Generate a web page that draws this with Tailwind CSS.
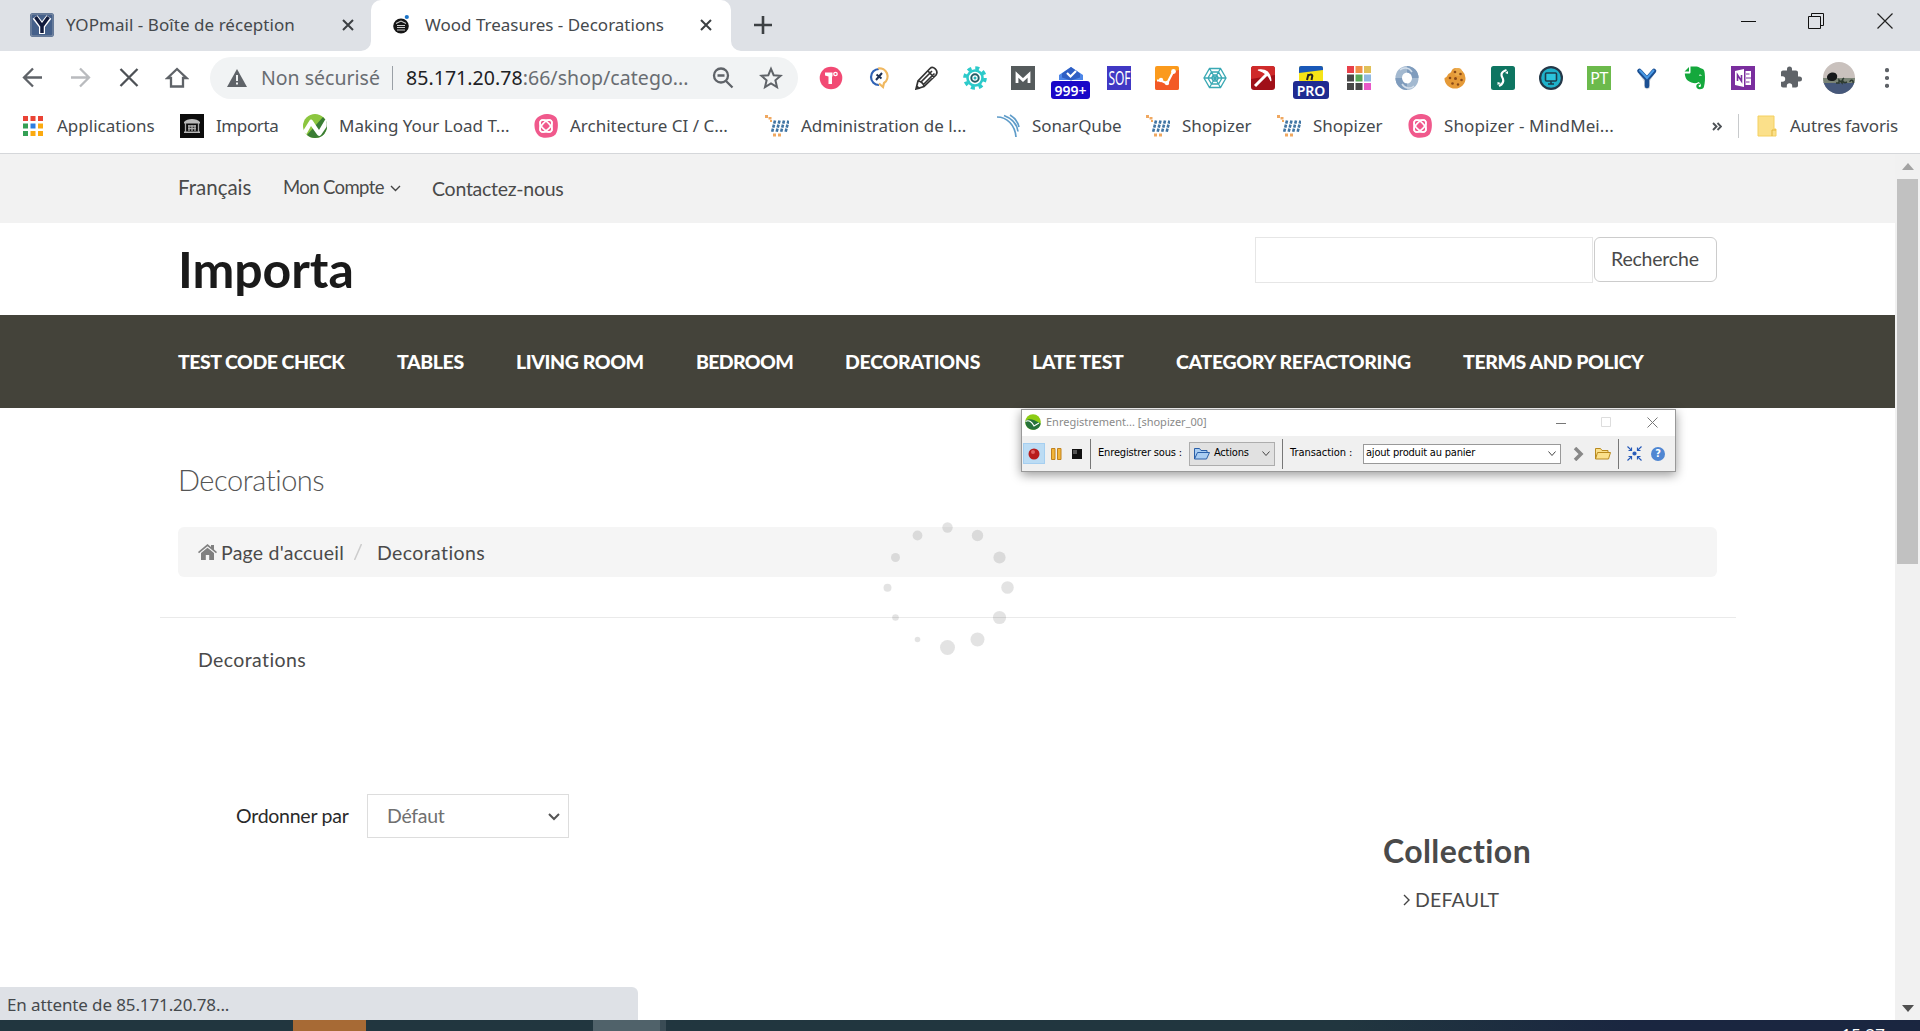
<!DOCTYPE html>
<html lang="fr">
<head>
<meta charset="utf-8">
<title>Wood Treasures - Decorations</title>
<script src="https://cdn.jsdelivr.net/npm/@tailwindcss/browser@4"></script>
</head>
<body class="w-[1920px] h-[1031px] overflow-hidden flex flex-col bg-white font-['Noto_Sans',sans-serif] text-[17px] text-[#45494d] whitespace-nowrap">

<svg class="hidden">
  <symbol id="cart" viewBox="0 0 24 24">
    <g fill="#f0a860"><rect x="0" y="1" width="3" height="3"/><rect x="3.500" y="3" width="3" height="2.500"/><rect x="5" y="6" width="2" height="2"/><rect x="8" y="19.500" width="3" height="3"/><rect x="13" y="19.500" width="3" height="3"/></g>
    <g stroke="#3f74a3" stroke-width="2.600" stroke-dasharray="3.200 1"><path d="M10 6.500 7 18.500M14.500 6.500 11.500 18.500M19 6.500l-3 12M23.500 6.500l-3 12"/></g>
  </symbol>
  <symbol id="mind" viewBox="0 0 24 24">
    <path fill="#f0598c" d="M8 1c4-2 12-.5 14.500 3 2 4 2 12-1 16.500C18 24 9 25 5 22 1 19-.5 12 1 7c1-3 4-5 7-6z"/>
    <g fill="none" stroke="#fff" stroke-width="1.600"><rect x="6" y="6" width="12" height="12" rx="3"/><ellipse cx="12" cy="12" rx="7.500" ry="3.800" transform="rotate(45 12 12)"/><ellipse cx="12" cy="12" rx="7.500" ry="3.800" transform="rotate(-45 12 12)"/></g>
  </symbol>
  <symbol id="close" viewBox="0 0 14 14"><path d="M2 2l10 10M12 2 2 12" stroke="#3c4043" stroke-width="2" fill="none"/></symbol>
  <symbol id="neo" viewBox="0 0 16 16"><circle cx="8" cy="8" r="7.800" fill="#8ccc14"/><path d="M.4 7C4 4 8 5 15.700 9.500 15 13.500 12 16 8 15.800 3.500 15.500 0 12 .4 7z" fill="#26733a"/><path d="M.5 7.500C4 5.500 7 8 9 12l5-3" stroke="#fff" fill="none" stroke-width="1.100"/></symbol>
</svg>

<!-- Tab strip -->
<header class="h-[51px] shrink-0 bg-[#dee1e6] flex">
  <div class="w-[371px] flex items-center pl-[30px] pr-[16px] pb-[2px]">
    <svg class="w-6 h-6" viewBox="0 0 24 24"><rect width="24" height="24" rx="3" fill="#45608a"/><rect x="1" y="1" width="22" height="22" rx="2" fill="none" stroke="#8794a8"/><path d="M5 4l7 9 7-9M12 12v9" stroke="#fff" stroke-width="6" fill="none"/><path d="M5.500 4l6.500 9 6.500-9M12 12v8" stroke="#101a3c" stroke-width="3.500" fill="none"/></svg>
    <span class="ml-3 tracking-[0.05px]">YOPmail - Boîte de réception</span>
    <svg class="w-[14px] h-[14px] ml-auto"><use href="#close"/></svg>
  </div>
  <div class="relative w-[360px] bg-white rounded-t-[10px] flex items-center pl-[22px] pr-[18px] pb-[2px]">
    <svg class="absolute -left-[10px] bottom-0 w-[10px] h-[10px]"><path d="M10 0v10H0A10 10 0 0 0 10 0z" fill="#fff"/></svg>
    <svg class="absolute -right-[10px] bottom-0 w-[10px] h-[10px]"><path d="M0 0v10h10A10 10 0 0 1 0 0z" fill="#fff"/></svg>
    <svg class="w-5 h-6" viewBox="0 0 20 24"><ellipse cx="8" cy="13" rx="7.800" ry="7.500" fill="#151515"/><path d="M3 10.500l5-2.500 5 2.500M4 12.500h8M4 14.500h8M4 17h8" stroke="#ccc" stroke-width="1.100" fill="none"/><circle cx="13.800" cy="4" r="2.100" fill="#1a73c8"/></svg>
    <span class="ml-[12px]">Wood Treasures - Decorations</span>
    <svg class="w-[14px] h-[14px] ml-auto"><use href="#close"/></svg>
  </div>
  <div class="flex-1 flex items-center pl-[23px]">
    <svg class="w-[18px] h-[18px] mb-[2px]"><path d="M9 0v18M0 9h18" stroke="#3c4043" stroke-width="2.600"/></svg>
    <svg class="ml-auto w-[15px] h-[15px] mb-[9px]"><path d="M0 7.500h15" stroke="#111" stroke-width="1"/></svg>
    <svg class="ml-[52px] w-4 h-4 mb-[9px]" fill="none" stroke="#111"><path d="M.5 3.500h12v12H.5zM3.500 3.500v-3h12v12h-3"/></svg>
    <svg class="ml-[53px] mr-[27px] w-4 h-4 mb-[9px]" fill="none" stroke="#222" stroke-width="1.200"><path d="M.5.500l15 15M15.500.500l-15 15"/></svg>
  </div>
</header>

<!-- Toolbar -->
<div class="h-[54px] shrink-0 flex items-center pl-[21px]" >
  <svg class="w-6 h-6" fill="none" stroke="#5f6368" stroke-width="2.300" viewBox="0 0 24 24"><path d="M21 11.500H3M12 2.500l-9 9 9 9"/></svg>
  <svg class="ml-6 w-6 h-6" fill="none" stroke="#b9bbbe" stroke-width="2.300" viewBox="0 0 24 24"><path d="M2 11.500h18M11 2.500l9 9-9 9"/></svg>
  <svg class="ml-6 w-6 h-6" fill="none" stroke="#4d5156" stroke-width="2.300" viewBox="0 0 24 24"><path d="M3.500 3l17 17M20.500 3l-17 17"/></svg>
  <svg class="ml-6 w-6 h-6" fill="none" stroke="#5f6368" stroke-width="2.300" viewBox="0 0 24 24"><path d="M2.500 12 12 3l9.500 9H18v8.500H6V12z"/></svg>
  <div class="ml-[21px] w-[588px] h-[42px] rounded-full bg-[#f1f3f4] flex items-center pl-[17px] text-[19.5px]">
    <svg class="w-5 h-[18px]" viewBox="0 0 20 18"><path d="M10 0l10 18H0z" fill="#5f6368"/><path d="M10 6v6M10 13.500v2" stroke="#f1f3f4" stroke-width="2"/></svg>
    <span class="ml-[14px] w-[131px] text-[#696d72]">Non sécurisé</span>
    <span class="w-px h-6 bg-[#9aa0a6]"></span>
    <span class="ml-[13px] tracking-[0.05px] text-[#696d72]"><span class="text-[#202124]">85.171.20.78</span>:66/shop/catego...</span>
    <svg class="ml-auto w-6 h-6" viewBox="0 0 24 24" fill="none" stroke="#5f6368" stroke-width="2.300"><circle cx="10" cy="9.500" r="7"/><path d="M6.500 9.500h7M15 15l6.500 6.500"/></svg>
    <svg class="ml-6 mr-[15px] w-6 h-6" viewBox="0 0 24 24" fill="none" stroke="#5f6368" stroke-width="2"><path d="M12 2.800l2.700 6.400 6.900.6-5.200 4.500 1.600 6.800-6-3.600-6 3.600 1.600-6.800-5.200-4.500 6.900-.6z"/></svg>
  </div>
  <!-- Extensions -->
  <div class="ml-[21px] flex items-center gap-6">
    <svg class="w-6 h-6" viewBox="0 0 24 24"><circle cx="12" cy="12" r="11.300" fill="#f24a74"/><path d="M6 6.500h7.500v4H13V18h-3.500v-7.500L6 9.500z" fill="#fff"/><circle cx="16.500" cy="8" r="1.700" fill="none" stroke="#fff" stroke-width="1.300"/></svg>
    <svg class="w-6 h-6" viewBox="0 0 24 24" fill="none"><path d="M12 3a8 8 0 1 0 0 16" stroke="#2f62b5" stroke-width="2.200"/><path d="M11 2.500a8 8 0 0 1 6 14.500l-1 4-4-3.500" stroke="#f0b860" stroke-width="2.200"/><path d="M9 14l6-7M9.500 8.500l5 4" stroke="#1c2f52" stroke-width="2"/></svg>
    <svg class="w-6 h-6" viewBox="0 0 24 24" fill="none" stroke="#333" stroke-width="1.700"><path d="M1 23l2-8L15 2.500c3-3 9 2 6 6.500L9 20.500zM3 15c3 0 6 3 6 5.500M13 5l6 6.500M6 16 17 5M9 18 19.500 7.500M1 23l3-.800-2-2z"/></svg>
    <svg class="w-6 h-6" viewBox="0 0 24 24" fill="none"><circle cx="12" cy="12" r="10" stroke="#2ccaca" stroke-width="3.600" stroke-dasharray="4 3.850"/><circle cx="12" cy="12" r="7.500" stroke="#2ccaca" stroke-width="2.600"/><circle cx="12" cy="12" r="3.700" stroke="#245d66" stroke-width="2"/><circle cx="12" cy="12" r="1.500" fill="#2ab7bd"/></svg>
    <svg class="w-6 h-6" viewBox="0 0 24 24"><path d="M0 0h24v24H0z" fill="#555b5c"/><path d="M6 17V8.500l6 5.500 6-5.500V17" fill="none" stroke="#fff" stroke-width="2.800"/></svg>
    <div class="relative w-6 h-6"><svg class="w-6 h-6" viewBox="0 0 24 24"><path d="M0 9l12-8 12 8v5H0z" fill="#4d86e8"/><path d="M3 7.500 12 1l9 6.500v4l-9 3-9-3z" fill="#2f5fc4"/><path d="M8 7l3.500 3.500L17 5" stroke="#fff" stroke-width="2.200" fill="none"/></svg>
      <span class="absolute -left-[8px] top-[15px] w-[39px] h-[18px] rounded-[3px] bg-[#1a08c8] text-white text-[14px] font-semibold leading-[19px] text-center">999+</span></div>
    <div class="w-6 h-6 bg-[#4038c4] flex items-center justify-center"><span class="text-white text-[20px] leading-6 font-['Noto_Sans',sans-serif] scale-x-[0.6]">SOF</span></div>
    <svg class="w-6 h-6" viewBox="0 0 24 24"><rect width="24" height="24" rx="2" fill="#fb9a1c"/><path d="M0 15l6-2 6 4 8-12 4-1v18a2 2 0 0 1-2 2H2a2 2 0 0 1-2-2z" fill="#f35a26"/><path d="M2 14.500h4l6 3L18.500 5" stroke="#fff" stroke-width="2.200" fill="none"/><g fill="#fff"><circle cx="6" cy="14" r="2.200"/><circle cx="12" cy="17" r="2.200"/><circle cx="18.500" cy="5.500" r="2.400"/></g></svg>
    <svg class="w-6 h-6" viewBox="0 0 24 24" fill="none" stroke="#3aa9b4" stroke-width="1.300"><path d="M6.500 2.500h11L23 12l-5.500 9.500h-11L1 12zM8.500 6h7L19 12l-3.500 6h-7L5 12zM10.300 9h3.400l1.700 3-1.700 3h-3.400l-1.700-3zM1 12h22M6.500 2.500l11 19M17.500 2.500l-11 19"/></svg>
    <svg class="w-6 h-6" viewBox="0 0 24 24"><rect width="24" height="24" rx="3" fill="#a01018"/><path d="M0 13V3a3 3 0 0 1 3-3h18a3 3 0 0 1 3 3v6z" fill="#cf2a2a"/><path d="M4 20 17 7" stroke="#fff" stroke-width="3"/><path d="M7 4c8-1 12 2 13 11-2-5-6-9-13-11z" fill="#fff" stroke="#fff" stroke-width="1.200"/></svg>
    <div class="relative w-6 h-6"><svg class="w-6 h-6" viewBox="0 0 24 24"><path d="M0 2a2 2 0 0 1 2-2h20a2 2 0 0 1 2 2v20H0z" fill="#f6e416"/><path d="M0 2a2 2 0 0 1 2-2h20a2 2 0 0 1 2 2v2L0 7z" fill="#1958b8"/><path d="M8 14l1.500-6M9 10c3-3 5-1 4 1.500L12.500 14" stroke="#222" stroke-width="2" fill="none"/></svg>
      <span class="absolute -left-[6px] top-[15px] w-9 h-[18px] rounded-[3px] bg-[#1f2b91] text-white text-[14px] font-semibold leading-[19px] text-center">PRO</span></div>
    <svg class="w-6 h-6" viewBox="0 0 24 24"><path fill="#e8404a" d="M0 0h7v7H0z"/><path fill="#f09048" d="M8.500 0h7v7h-7z"/><path fill="#e0c058" d="M17 0h7v7h-7z"/><path fill="#484848" d="M0 8.500h7v7H0zM0 17h7v7H0zM8.500 17h7v7h-7z"/><path fill="#58a858" d="M8.500 8.500h7v7h-7z"/><path fill="#90b8e0" d="M17 8.500h7v7h-7z"/><path fill="#e858c8" d="M17 17h7v7h-7z"/></svg>
    <svg class="w-6 h-6" viewBox="0 0 24 24" fill="none" stroke-width="6.500"><ellipse cx="12" cy="12" rx="8.300" ry="8.700" stroke="#a3b9d0"/><path d="M12 3.300a8.300 8.700 0 0 1 8.300 8.700M12 20.700A8.300 8.700 0 0 1 3.700 12" stroke="#7f9cbd"/><path d="M5 4c3-3 9-3 12 2M19 20c-3 3-9 3-12-2" stroke="#d3deea" stroke-width="1.500"/></svg>
    <svg class="w-6 h-6" viewBox="0 0 24 24"><path d="M12 2a10.500 10 0 0 1 10.500 10A10.500 10 0 0 1 12 22.500 10.500 10 0 0 1 1.500 12C5 11 4 8 7 7c2-1 1-4 5-5z" fill="#e59a38"/><circle cx="15" cy="6" r="4" fill="#eba94a"/><g fill="#8a4a18"><circle cx="12" cy="6" r="1.300"/><circle cx="17.500" cy="8" r="1.300"/><circle cx="7" cy="12" r="1.300"/><circle cx="12.500" cy="12.500" r="1.500"/><circle cx="18.500" cy="14" r="1.300"/><circle cx="9.500" cy="17.500" r="1.300"/><circle cx="15" cy="18.500" r="1.200"/></g></svg>
    <svg class="w-6 h-6" viewBox="0 0 24 24"><rect width="24" height="24" rx="2.500" fill="#0e7561"/><path d="M15.500 4c-6 2-6 5-3.500 9 1 3 0 5-4 7" stroke="#fff" stroke-width="2.200" fill="none"/><path d="M14 7l3-2v3zM10 17l-3.500 2v-3z" fill="#fff"/></svg>
    <svg class="w-6 h-6" viewBox="0 0 24 24"><circle cx="12" cy="12" r="12" fill="#253848"/><circle cx="12" cy="12" r="9.800" fill="#1fb1ca"/><rect x="6.500" y="7" width="11" height="8" rx="1" fill="#2cc4dc" stroke="#1c3c4c" stroke-width="1.600"/><path d="M9 18h6M12 15v3" stroke="#1c3c4c" stroke-width="1.600"/></svg>
    <div class="w-6 h-6 bg-[#6cba4c] text-white text-[16px] leading-6 text-center tracking-[-0.5px]">PT</div>
    <svg class="w-6 h-6" viewBox="0 0 24 24"><path d="M7 4l5 7 5-7 3 3-5 8v7l-3 1.500-3-2v-6L4 8z" fill="#d8dadd"/><path d="M4.500 5l7.500 8 7-8M12 12v8" stroke="#1b4f92" stroke-width="4.600" stroke-linecap="round" fill="none"/><path d="M5 4.500l7 7.500 6.500-7.500" stroke="#4a9ae6" stroke-width="2" fill="none" stroke-linecap="round"/></svg>
    <svg class="w-6 h-6" viewBox="0 0 24 24"><path fill="#14a83c" d="M7.500.500h6c2 0 3 1.500 5 2 2 .500 2.800 1.500 3.200 4.500.6 5 .3 10-.8 14-.700 2.500-5.500 3-7 1-1.500-2.500 0-5 3-4.500v1.500c-2 0-1.500 2 0 2 2 0 1-4-1.500-5-1.500 1.500-4 1.500-7 .500C4 15 2 12 1.800 7.500H6c1 0 1.500-.5 1.500-1.500zM6 1v4.500H1.500z"/><path d="M16 9.500c1-.8 2-.5 2.500.5" stroke="#fff" fill="none"/></svg>
    <svg class="w-6 h-6" viewBox="0 0 24 24"><path d="M0 0h24v24H0z" fill="#7a2e9e"/><path d="M4 5l9-2v18l-9-2zM14.500 5H20v14h-5.500z" fill="#fff"/><path d="M6.500 15V9l4 6V9" stroke="#7a2e9e" stroke-width="1.600" fill="none"/><path d="M15 8h3.500M15 12h5.500M15 16h3.500" stroke="#7a2e9e" stroke-width="1.200"/></svg>
    <svg class="w-6 h-6" viewBox="0 0 24 24"><path fill="#5f6368" d="M20.500 10.500H19v-4c0-1.100-.9-2-2-2h-4V3a2.500 2.500 0 0 0-5 0v1.500H4c-1.100 0-2 .9-2 2v3.800h1.500a2.700 2.700 0 0 1 0 5.400H2v3.800c0 1.100.9 2 2 2h3.800V20a2.700 2.700 0 0 1 5.400 0v1.500H17c1.100 0 2-.9 2-2v-4h1.500a2.500 2.500 0 0 0 0-5z"/></svg>
  </div>
  <svg class="ml-[20px] w-8 h-8" viewBox="0 0 32 32"><defs><clipPath id="av"><circle cx="16" cy="16" r="16"/></clipPath></defs><g clip-path="url(#av)"><path d="M0 0h32v32H0z" fill="#c9c1bd"/><path d="M0 20h32v12H0z" fill="#46587a"/><path d="M0 16h32v5H0z" fill="#7a8476"/><path d="M4 15c0-4 8-7 10-2 1 4-2 6-5 6s-5-1-5-4z" fill="#15181a"/><path d="M13 21h3v-3l3 3v-3M21 16c-3 2-1 6 3 4M27 20c0-3 4-2 3 1" stroke="#2c3a30" stroke-width="1.500" fill="none"/></g></svg>
  <svg class="ml-[30px] w-1 h-5" fill="#5f6368" viewBox="0 0 4 20"><circle cx="2" cy="2.200" r="2.100"/><circle cx="2" cy="10" r="2.100"/><circle cx="2" cy="17.800" r="2.100"/></svg>
</div>

<!-- Bookmarks -->
<div class="h-[49px] shrink-0 border-b border-[#d5d7da] flex items-center pb-[6px] pl-[23px]">
  <svg class="w-5 h-5" viewBox="0 0 20 20"><path fill="#ea4335" d="M0 0h5v5H0zM7.500 0h5v5h-5zM15 0h5v5h-5z"/><path fill="#34a055" d="M0 7.500h5v5H0zM0 15h5v5H0z"/><path fill="#2d7de0" d="M7.500 7.500h5v5h-5z"/><path fill="#fbaa10" d="M15 7.500h5v5h-5zM7.500 15h5v5h-5zM15 15h5v5h-5z"/></svg>
  <span class="ml-[14px] w-[123px]">Applications</span>
  <svg class="w-6 h-6" viewBox="0 0 24 24"><path d="M0 0h24v24H0z" fill="#0c0c0c"/><path d="M4 8c3-4 13-4 16 0v1.500H4zM4 17.500h16V19H4z" fill="#bbb"/><path d="M5.500 9v9M18.500 9v9M8 12h8M8 14.500h8M9 11v6M12 11v6M15 11v6" stroke="#aaa" stroke-width="1.300"/></svg>
  <span class="ml-3 w-[87px] tracking-[-0.4px]">Importa</span>
  <svg class="w-6 h-6" viewBox="0 0 24 24"><circle cx="12" cy="12" r="12" fill="#8cc63f"/><path d="M4 21 20 3a12 12 0 0 1-8 21c-3 0-6-1-8-3z" fill="#3a7d34"/><path d="M0 17 6.500 6.500c1-1.500 2.500-1 3.500.5l6 9L22.500 5c1.500 3 1.500 5 1 8l-5.500 8c-1.500 1.500-3 1-4-.500L8 12l-4.500 8C2 19 .5 18 0 17z" fill="#fff"/></svg>
  <span class="ml-3 w-[195px]">Making Your Load T...</span>
  <svg class="w-6 h-6"><use href="#mind"/></svg>
  <span class="ml-3 w-[195px]">Architecture CI / C...</span>
  <svg class="w-6 h-6"><use href="#cart"/></svg>
  <span class="ml-3 w-[195px]">Administration de l...</span>
  <svg class="w-6 h-6" viewBox="0 0 24 24" fill="none" stroke="#5f9cc9" stroke-width="1.700"><path d="M1 3c10 0 18 8 19 20M8 1.500c8 3 13 9 14 16M14 1c5 3 8 7 9 12"/></svg>
  <span class="ml-3 w-[114px] tracking-[-0.1px]">SonarQube</span>
  <svg class="w-6 h-6"><use href="#cart"/></svg>
  <span class="ml-3 w-[95px]">Shopizer</span>
  <svg class="w-6 h-6"><use href="#cart"/></svg>
  <span class="ml-3 w-[95px]">Shopizer</span>
  <svg class="w-6 h-6"><use href="#mind"/></svg>
  <span class="ml-3 tracking-[0.1px]">Shopizer - MindMei...</span>
  <svg class="ml-auto w-[10px] h-[9px]" fill="none" stroke="#4d5156" stroke-width="1.900"><path d="M1 1l3.500 3.500L1 8M5.500 1 9 4.500 5.500 8"/></svg>
  <span class="ml-[16px] w-px h-6 bg-[#c8cacc]"></span>
  <svg class="ml-[18px] w-[20px] h-[22px]" viewBox="0 0 20 22"><path d="M1 1h16v13h2v7H1z" fill="#fbe08a" stroke="#f4d060"/><path d="M15 21v-6h4" stroke="#e2b53c" fill="none"/></svg>
  <span class="ml-[13px] mr-[22px] tracking-[-0.15px]">Autres favoris</span>
</div>

<!-- Page viewport -->
<div class="relative flex-1 min-h-0 flex font-['Lato',sans-serif] text-[19.5px] text-[#4a4a4a]">
  <main class="w-[1895px] flex flex-col">
    <div class="h-[69px] shrink-0 bg-[#f2f2f2] pl-[178px] flex items-center">
      <span class="text-[20.5px] w-[105px] -mt-[3px]">Français</span>
      <span class="text-[18.5px] tracking-[-0.6px] w-[107px] -mt-px">Mon Compte</span>
      <svg class="w-[11px] h-[7px]" fill="none" stroke="#444" stroke-width="1.400"><path d="M1 1l4.500 4.500L10 1"/></svg>
      <span class="ml-[31px] mt-px tracking-[-0.25px]">Contactez-nous</span>
    </div>
    <div class="h-[92px] shrink-0 pl-[178px] pr-[178px] flex items-start">
      <h1 class="text-[50px] leading-[60px] font-bold text-[#1a1a1a] mt-[16px] tracking-[-0.05px]">Importa</h1>
      <div class="ml-auto mt-[14px] w-[338px] h-[46px] border border-[#e6e6e6]"></div>
      <div class="ml-px mt-[14px] w-[123px] h-[45px] border border-[#ccc] rounded-md leading-[42px] pl-[16px] tracking-[-0.2px]">Recherche</div>
    </div>
    <nav class="h-[93px] shrink-0 bg-[#44433a] pl-[178px] flex items-center font-black text-white tracking-[-0.4px]">
      <span class="w-[219px] tracking-[-0.5px]">TEST CODE CHECK</span><span class="w-[119px]">TABLES</span><span class="w-[180px]">LIVING ROOM</span><span class="w-[149px] tracking-[-0.65px]">BEDROOM</span><span class="w-[187px] tracking-[-0.3px]">DECORATIONS</span><span class="w-[144px]">LATE TEST</span><span class="w-[287px] tracking-[-0.32px]">CATEGORY REFACTORING</span><span>TERMS AND POLICY</span>
    </nav>
    <section class="mx-[160px] w-[1576px] h-[210px] shrink-0 pl-[18px] pr-[19px] border-b border-[#eaeaea]">
      <h2 class="pt-[54px] text-[29px] leading-[36px] font-light text-[#555] tracking-[-0.45px]">Decorations</h2>
      <div class="mt-[29px] h-[50px] rounded-md bg-[#f5f5f5] flex items-center pl-[20px]">
        <svg class="w-[19px] h-[16px]" viewBox="0 0 19 16" fill="#808080"><path d="M9.500 0 13 3V1h3v4.600l3 2.500-1 1.200L9.500 2.200 1 9.300 0 8.100z"/><path d="M9.500 3.700 16 9.100V16h-4.800v-5H7.800v5H3V9.100z"/></svg>
        <span class="ml-1 mt-[2px] w-[133px] tracking-[0.25px]">Page d'accueil</span>
        <svg class="w-2 h-[16px]" stroke="#ccc" stroke-width="1.500"><path d="M7.500 0l-7 16"/></svg>
        <span class="ml-[15px] mt-[2px] tracking-[0.4px]">Decorations</span>
      </div>
    </section>
    <section class="flex-1 px-[198px]">
      <p class="pt-[30px] leading-6 tracking-[0.4px]">Decorations</p>
      <div class="flex justify-between">
        <div class="mt-[122px] h-[44px] ml-[38px] flex items-center text-[#2a2a2a]">
          <span class="w-[131px] tracking-[-0.25px]">Ordonner par</span>
          <div class="w-[202px] h-[44px] border border-[#ddd] flex items-center justify-between pl-[19px] pr-2 text-[#707070]"><span class="tracking-[-0.3px]">Défaut</span>
            <svg class="w-3 h-[8px] mt-[2px]" fill="none" stroke="#555" stroke-width="2"><path d="M1 1l5 5 5-5"/></svg></div>
        </div>
        <aside class="mt-[159px] w-[314px]">
          <h3 class="text-[32px] leading-[40px] font-bold tracking-[0.4px]">Collection</h3>
          <div class="mt-[17px] leading-6 flex items-center pl-[20px]"><svg class="w-[7px] h-[12px]" fill="none" stroke="#444" stroke-width="1.400"><path d="M1 1l5 5-5 5"/></svg><span class="ml-[5px] tracking-[0.2px]">DEFAULT</span></div>
        </aside>
      </div>
    </section>
  </main>

  <!-- Scrollbar -->
  <div class="w-[25px] bg-[#f1f1f1] flex flex-col items-center">
    <svg class="mt-[9px] w-3 h-[7px]"><path d="M0 7l6-7 6 7z" fill="#a3a3a3"/></svg>
    <div class="mt-[9px] w-[21px] h-[385px] bg-[#c1c1c1]"></div>
    <svg class="mt-auto mb-[8px] w-3 h-[7px]"><path d="M0 0l6 7 6-7z" fill="#505050"/></svg>
  </div>

  <!-- Loading spinner -->
  <svg class="absolute left-[877px] top-[363px] w-[140px] h-[140px]" fill="#000" fill-opacity=".11" viewBox="877 517 140 140"><circle cx="947.500" cy="527.500" r="5.200"/><circle cx="977.500" cy="535.500" r="5.700"/><circle cx="999.500" cy="557.500" r="6.100"/><circle cx="1007.500" cy="587.500" r="6.300"/><circle cx="999.500" cy="617.500" r="6.600"/><circle cx="977.500" cy="639.500" r="7"/><circle cx="947.500" cy="647.500" r="7.500"/><circle cx="917.500" cy="639.500" r="2.800"/><circle cx="895.500" cy="617.500" r="3.300"/><circle cx="887.500" cy="587.800" r="4"/><circle cx="895.500" cy="557.500" r="4.500"/><circle cx="917.500" cy="535.500" r="4.900"/></svg>

  <!-- Status bubble -->
  <div class="absolute left-0 bottom-0 w-[638px] h-[33px] rounded-tr-md bg-[#dee1e6] pl-[7px] leading-[35px] text-[17px] tracking-[-0.12px] text-[#45494d] font-['Noto_Sans',sans-serif]">En attente de 85.171.20.78...</div>

  <!-- Recorder window -->
  <div class="absolute left-[1021px] top-[255px] w-[655px] h-[63px] border border-[#999] shadow-[0_3px_10px_rgba(0,0,0,0.4)] bg-[#f0f0f0] flex flex-col text-[11px] text-black font-['DejaVu_Sans_Condensed','DejaVu_Sans',sans-serif]">
    <div class="h-[26px] bg-white flex items-center pl-[3px] pb-[2px] text-[#8a8a8a] font-['Noto_Sans',sans-serif]">
      <svg class="w-4 h-4"><use href="#neo"/></svg>
      <span class="ml-[5px]">Enregistrement... [shopizer_00]</span>
      <svg class="ml-auto w-[10px] h-[11px]"><path d="M0 6.500h10" stroke="#777"/></svg>
      <svg class="ml-[35px] w-[10px] h-[10px]"><path d="M.5.500h9v9h-9z" stroke="#ddd" fill="none"/></svg>
      <svg class="ml-[36px] mr-[17px] w-[11px] h-[11px]"><path d="M.5.500l10 10M10.500.500l-10 10" stroke="#777"/></svg>
    </div>
    <div class="flex-1 flex items-center pl-px">
      <div class="w-[22px] h-[21px] bg-[#bcdcf4] border border-[#a6cff0] flex items-center justify-center"><svg class="w-3 h-3"><circle cx="6" cy="6" r="5.500" fill="#b81c1c"/><circle cx="5" cy="4" r="2" fill="#e06060"/></svg></div>
      <svg class="ml-[6px] w-[11px] h-3"><path d="M.5.500h3.500v11H.5zM6.500.500H10v11H6.500z" fill="#f2b53a" stroke="#c08220"/></svg>
      <svg class="ml-[10px] w-[10px] h-[10px]"><path d="M0 0h10v10H0z" fill="#111"/><path d="M1 1h4v4H1z" fill="#555"/></svg>
      <span class="ml-[8px] w-px h-[30px] bg-[#777]"></span>
      <span class="ml-[7px] w-[91px] tracking-[-0.15px]">Enregistrer sous :</span>
      <div class="w-[86px] h-[24px] bg-[#e1e1e1] border border-[#adadad] flex items-center pl-1 pr-1">
        <svg class="w-4 h-[13px]" viewBox="0 0 16 13"><path d="M.5 12V1.500h5l1.500 2h6v2M.5 12l3-6.500h12L12.500 12z" fill="#a9cdf2" stroke="#2a5fa8"/></svg>
        <span class="ml-[4px] tracking-[-0.2px]">Actions</span>
        <svg class="ml-auto w-2 h-[6px]" fill="none" stroke="#444"><path d="M.5.500 4 4.500 7.500.500"/></svg></div>
      <span class="ml-[7px] w-px h-[30px] bg-[#777]"></span>
      <span class="ml-[7px] w-[73px] tracking-[-0.05px]">Transaction :</span>
      <div class="w-[198px] h-[20px] bg-white border border-[#999] flex items-center pl-[2px] pr-[4px]"><span class="tracking-[-0.2px]">ajout produit au panier</span><svg class="ml-auto w-2 h-[6px]" fill="none" stroke="#444"><path d="M.5.500 4 4.500 7.500.500"/></svg></div>
      <svg class="ml-[12px] w-[11px] h-[14px]" fill="none" stroke="#888" stroke-width="3.500"><path d="M2 1l6 6-6 6"/></svg>
      <svg class="ml-[11px] w-4 h-[13px]" viewBox="0 0 16 13"><path d="M.5 12V1.500h5l1.500 2h6v2M.5 12l2-6.500h13L13.500 12z" fill="#fbe08a" stroke="#b98a1e"/></svg>
      <span class="ml-[7px] w-px h-[30px] bg-[#777]"></span>
      <svg class="ml-[8px] w-[15px] h-[15px]" viewBox="0 0 15 15" fill="none" stroke="#2458b8" stroke-width="1.200"><circle cx="7.500" cy="7.500" r="1.500" fill="#2458b8"/><path d="M.5.500l3.700 3.700M1.500 4.500h3v-3M14.500.500l-3.700 3.700M10.500 1.500v3h3M.5 14.500l3.700-3.700M1.500 10.500h3v3M14.500 14.500l-3.700-3.700M13.500 10.500h-3v3"/></svg>
      <div class="ml-[9px] w-[14px] h-[14px] rounded-full bg-[#4f86d2] text-white text-[11px] font-bold leading-[14px] text-center">?</div>
    </div>
  </div>
</div>

<!-- Taskbar -->
<footer class="h-[11px] shrink-0 overflow-hidden flex bg-linear-to-r from-[#21363f] from-70% to-[#1a2640] to-85%">
  <span class="ml-[293px] w-[73px] bg-[#a76a35]"></span>
  <span class="ml-[227px] w-[67px] bg-[#50626a]"></span>
  <span class="w-[6px] bg-[#3a4c55]"></span>
  <span class="ml-auto mr-[35px] mt-[5px] text-white text-[17px] leading-[20px]">15:27</span>
</footer>
</body>
</html>
